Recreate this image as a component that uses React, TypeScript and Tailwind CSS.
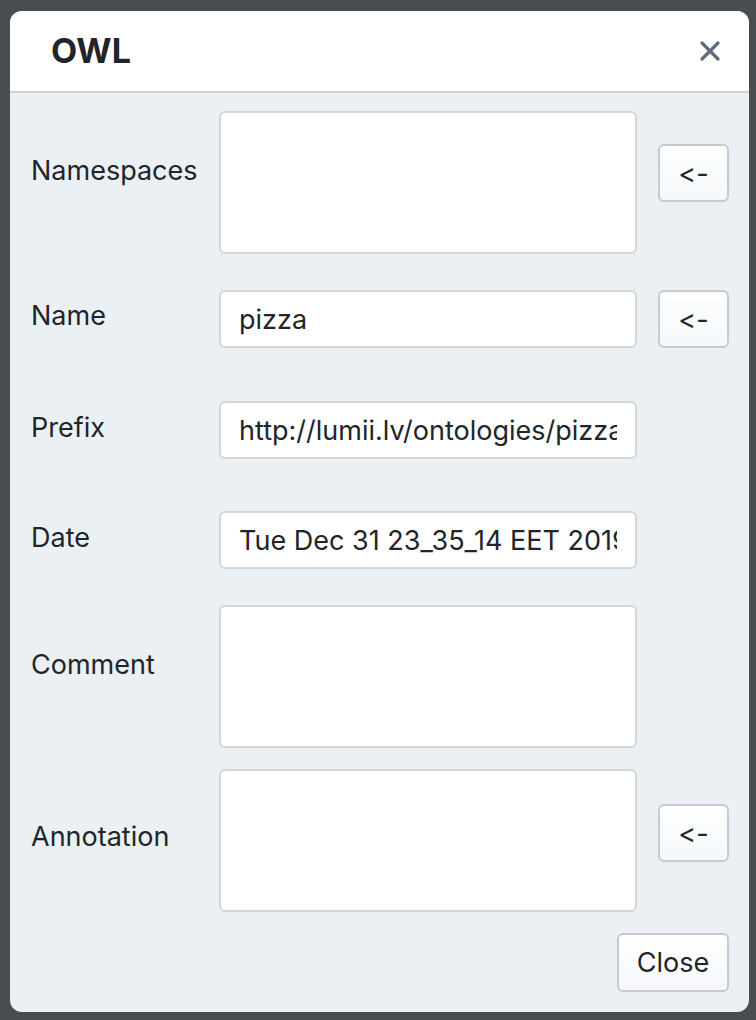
import React from 'react';

const inputCls =
    'w-[418px] h-[58px] rounded-[6px] border-2 border-[#d3d6d9] bg-white px-[18px] text-[27px] text-[#212529] outline-none font-[Inter,Arial,sans-serif]';

const areaCls =
    'w-[418px] h-[143px] rounded-[6px] border-2 border-[#d3d6d9] bg-white px-[18px] py-[8px] text-[27px] text-[#212529] outline-none resize-none font-[Inter,Arial,sans-serif]';

const btnCls =
    'h-[58px] rounded-[6px] border-2 border-[#c6cacf] bg-gradient-to-b from-white to-[#f5f7f9] text-[27px] text-[#212529] leading-none [font-feature-settings:"calt"_0,"liga"_0]';

function ArrowBtn({ className = '' }: { className?: string }) {
    return <button className={`${btnCls} w-[71px] ml-[21px] ${className}`}>&lt;-</button>;
}

export default function App() {
    return (
        <div className="min-h-screen bg-[#4a4d50] pt-[11px] pl-[10px] font-[Inter,Arial,sans-serif] text-[#212529]">
            <div className="w-[739px] h-[1001px] rounded-[12px] overflow-hidden bg-[#ebf0f4] flex flex-col">
                {/* header */}
                <div className="h-[82px] bg-white border-b-2 border-[#cdd1d5] flex items-center justify-between pl-[41px] pr-[27px]">
                    <h3 className="text-[34px] font-bold leading-none">OWL</h3>
                    <button className="w-[24px] h-[24px] flex items-center justify-center">
                        <svg width="22" height="22" viewBox="0 0 22 22">
                            <path d="M3 3 L19 19 M19 3 L3 19" stroke="#5f6d7a" strokeWidth="3.2" strokeLinecap="round" />
                        </svg>
                    </button>
                </div>

                {/* body */}
                <div className="pt-[18px] pl-[21px] pr-[20px] flex flex-col text-[27px] leading-[42px]">
                    <div className="flex items-start">
                        <label className="w-[188px] mt-[39px]">Namespaces</label>
                        <textarea className={areaCls} readOnly />
                        <ArrowBtn className="mt-[33px]" />
                    </div>

                    <div className="flex items-start mt-[36px]">
                        <label className="w-[188px] mt-[5px]">Name</label>
                        <input className={inputCls} defaultValue="pizza" readOnly />
                        <ArrowBtn />
                    </div>

                    <div className="flex items-start mt-[53px]">
                        <label className="w-[188px] mt-[6px]">Prefix</label>
                        <input className={inputCls} defaultValue="http://lumii.lv/ontologies/pizza.owl#" readOnly />
                    </div>

                    <div className="flex items-start mt-[52px]">
                        <label className="w-[188px] mt-[6px]">Date</label>
                        <input className={inputCls} defaultValue="Tue Dec 31 23_35_14 EET 2019" readOnly />
                    </div>

                    <div className="flex items-start mt-[36px]">
                        <label className="w-[188px] mt-[39px]">Comment</label>
                        <textarea className={areaCls} readOnly />
                    </div>

                    <div className="flex items-start mt-[21px]">
                        <label className="w-[188px] mt-[47px]">Annotation</label>
                        <textarea className={areaCls} readOnly />
                        <ArrowBtn className="mt-[35px]" />
                    </div>

                    <div className="flex justify-end mt-[21px]">
                        <button className={`${btnCls} w-[112px] h-[59px]`}>Close</button>
                    </div>
                </div>
            </div>
        </div>
    );
}
